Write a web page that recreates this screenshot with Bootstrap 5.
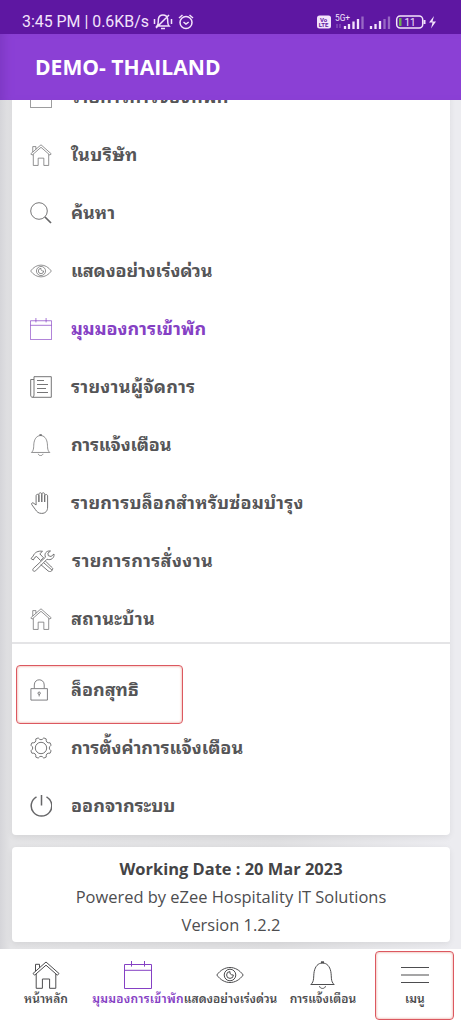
<!DOCTYPE html>
<html lang="th">
<head>
<meta charset="utf-8">
<meta name="viewport" content="width=device-width, initial-scale=1">
<title>DEMO- THAILAND</title>
<link href="https://cdn.jsdelivr.net/npm/bootstrap@5.3.0/dist/css/bootstrap.min.css" rel="stylesheet">
<style>
body{font-family:"Open Sans","Noto Sans Thai Looped","Noto Looped Thai","Loma","Waree","Garuda","Noto Sans Thai","Noto Sans",sans-serif;background:#e3e3e5;color:#4d4d4f;height:1024px;overflow:hidden}
svg{fill:none;stroke:currentColor;display:block;flex:none;overflow:visible}
.statusbar{height:34px;background:#5e17a2;color:#f3e3fb;font:400 15.9px/20px Roboto,sans-serif;padding:12px 24px 0 22px}
.statusbar svg{margin-top:-2px}
.statusbar .bells{margin-top:0}
.statusbar .signals{stroke:none}
.titlebar{height:66px;background:#8b40d5;color:#fff;font-size:21.1px;font-weight:700;padding-left:35px;box-shadow:inset 10px 0 10px -6px #7d38c3}
.content{height:849px;padding:0 11px 0 12px;background:linear-gradient(90deg,#d5d5d9 0,#dcdcdf 5px,#e4e4e6 11px,#e0e0e2 60%,#ececf0 98%)}
.panel{border:0;border-radius:4px;background:#fff;box-shadow:0 2px 6px #00000012}
.menu{margin-top:-32px;height:767px}
.entry{height:58px;padding-left:18px;font-size:18px;font-weight:700;line-height:28px;color:#555557}
.entry svg{width:22px;height:22px;margin-right:19px;stroke-width:.9;color:#666668}
.entry span,.tab span{white-space:nowrap}
.entry span{margin-top:-2px}
.ls-tight{letter-spacing:-.15px}
.ls-a{letter-spacing:.25px}
.ls-b{letter-spacing:.38px}
.entry.purple,.purple,.entry.purple svg{color:#8540c4}
.split{height:2px;background:#e4e4e6;margin:-6px 0 17px}
.info{margin-top:12px;height:95px;padding-top:8px;font-size:16.45px;line-height:28px}
.info b{color:#444446}
.tabs{height:75px;background:#fff}
.tab{width:92.8px;padding-top:12px;font-size:12px;font-weight:600;line-height:18px}
.tab svg{width:28px;height:28px;stroke-width:1;margin-bottom:1px}
.marked{outline:1.5px solid #dc5860;border-radius:3px;box-shadow:inset 0 0 2px 1px #f4cfc8}
.hl{left:17px;top:666px;width:165px;height:57px}
.hl2{left:376px;top:952px;width:77px;height:67px}
</style>
</head>
<body>
<svg width="0" height="0" class="position-absolute">
<defs>
<symbol id="home" viewBox="0 0 28 28"><path d="M1 12.5 14 1l13 11.5-1.6 1.7L14 4.2 2.6 14.2zM3.5 10.2V3.3h4v3.4M4.2 13v14.3h6.2V18h7.2v9.3h6.2V13"/></symbol>
<symbol id="cal" viewBox="0 0 28 28"><path d="M.5 3.5h27v24H.5zM.5 9.3h27M7.5 0v5.6M20.5 0v5.6"/></symbol>
<symbol id="eye" viewBox="0 0 28 28"><path d="M.8 14C8 4 20 4 27.2 14 20 24 8 24 .8 14z"/><circle cx="14" cy="14" r="5.800"/><path d="M14 10.600a3.400 3.400 0 1 0 3.400 3.400M14 10.600c-.5 2 .7 3.600 3.400 3.400"/></symbol>
<symbol id="bell" viewBox="0 0 28 28"><path d="M1.800 23.500c3.800-3 2.400-8 3.400-13C6.200 5.500 9 2 13.500 2s7.300 3.500 8.300 8.500c1 5-.4 10 3.400 13zM10.500 25.200c.5 3 5.500 3 6 0"/><path d="M12 1.300h3" stroke-width="2"/></symbol>
<symbol id="search" viewBox="0 0 22 22"><circle cx="9" cy="9" r="8.300"/><path d="m15 15 6 6" stroke-width="1.700"/></symbol>
<symbol id="paper" viewBox="0 0 22 22"><path d="M4 .7h17.300v20.600H2.600C1.200 21.300.7 20.500.7 19V3.500H4M4 .7V19q0 2-1.500 2.200M7 4.500h7M7 8.500h11M7 12.500h9M7 16.500h11"/></symbol>
<symbol id="hand" viewBox="0 0 22 22"><path d="M5.300 13V3.800c0-2 2.800-2 2.800 0V10 2.300c0-2 2.900-2 2.900 0V10 2.300c0-2 2.900-2 2.900 0V10 4c0-2 2.900-2 2.900 0v11c0 4-2 6.400-6 6.400-3 0-4.700-1.400-6.300-4L1 12.700c-.8-2 1-2.500 2.200-1.200z" transform="translate(.8 0)"/></symbol>
<symbol id="tools" viewBox="0 0 25 22"><path d="M1 8.500 3.200 6C4.500 2.500 8 .5 12.500 1.300L9.800 3.800l3.700 4-3 2.700-3.800-4-1.700.7L3.300 10zM13.800 12.800l8.300 7.400c1.100-1.600.7-2-.7-3.200l-5.800-5.800M20.500 1c-4.200-.6-6.600 2.800-5 6.200L3.300 18.500c-1.500 1.800.6 3.800 2.300 2.300L17 9.200c4 1.500 7.500-1.200 7-5.200l-3 2.500-2.700-.8-.4-2.500zM10.700 14.500l7.500 6.500c1.800 1.200 3.300.6 3.900-.8"/></symbol>
<symbol id="lock" viewBox="0 0 22 24"><path d="M0 10.500h18v12.500H0zM3.700 10V6.500c0-7.500 10.800-7.500 10.800 0V10M9 16.500v2.500"/><circle cx="9" cy="15.500" r="1.300"/></symbol>
<symbol id="gear" viewBox="0 0 22 22"><circle cx="11" cy="11" r="5.700"/><path d="M8.200.9Q11 4.600 13.800.9L16.200 1.900Q15.600 6.400 20.100 5.800L21.100 8.200Q17.400 11 21.100 13.800L20.100 16.200Q15.600 15.600 16.200 20.100L13.800 21.100Q11 17.400 8.200 21.100L5.800 20.100Q6.400 15.600 1.900 16.200L.9 13.800Q4.600 11 .9 8.200L1.900 5.800Q6.400 6.400 5.800 1.900z" stroke-linejoin="round"/></symbol>
<symbol id="power" viewBox="0 0 22 22"><path d="M6.500 1.800a10.300 10.300 0 1 0 10 0M11.500-.5v11" stroke-width="1.500"/></symbol>
</defs>
</svg>
<header>
<div class="statusbar d-flex">
<span id="clock">3:45 PM | 0.6KB/s</span>
<svg class="bells" width="39" height="20" viewBox="0 0 39 20" style="margin-left:4px" stroke-width="1.500"><path d="M4 14h12c-2-2-1-5-1.500-7.500C14 4 12 3 10 3S6 4 5.500 6.500C5 9 6 12 4 14zM8 16.500h4M3 16 16 3M1.500 7v5M18.500 7v5"/><circle cx="33" cy="10.500" r="6"/><path d="m30.500 10 2.500 2 2.700-2M26 6l3.500-3M40 6l-3.500-3"/></svg>
<svg class="signals ms-auto" width="121" height="20" viewBox="0 0 121 20"><rect x="1" y="5.500" width="14" height="13" rx="2.500" fill="#f3e3fb"/><g font-family="Roboto" font-weight="700"><text x="4" y="11.500" font-size="6" fill="#5e17a2">Vo</text><text x="2.700" y="17.300" font-size="6" fill="#5e17a2">LTE</text><text x="19" y="11" font-size="8.300" font-weight="400" fill="#f3e3fb">5G+</text></g>
<g stroke-width="2.300" stroke="#f3e3fb"><path d="M29 19v-3M33 19v-5M37.500 19v-7.500M42 19V9M55 19v-3M59.500 19v-5M64 19v-8"/><path d="M46.500 19V6.500M68.500 19V9M73 19V6.500" opacity=".4"/></g><path d="M21 18v-4M24 14v4" stroke="#f3e3fb" opacity=".4"/>
<rect x="80.700" y="6" width="26" height="12" rx="3.500" stroke="#f3e3fb" stroke-width="1.500"/><path d="M83 8h2.500v8H83z" fill="#6eaa50"/><path d="M108.500 10v4" stroke="#f3e3fb" stroke-width="2"/><text x="88.500" y="15.700" font-family="Roboto" font-size="10" fill="#f3e3fb">11</text><path d="m118 6-5 6.500h3.500l-1.500 6 5-7h-3.500z" fill="#f3e3fb"/></svg>
</div>
<div class="titlebar d-flex align-items-center position-relative z-2"><span id="title">DEMO- THAILAND</span></div>
</header>
<main class="content overflow-hidden">
<section class="panel menu">
<div class="entry d-flex align-items-center"><svg><use href="#cal"/></svg><span class="ls-a">รายการการจองที่พัก</span></div>
<div class="entry d-flex align-items-center"><svg><use href="#home"/></svg><span class="ls-b">ในบริษัท</span></div>
<div class="entry d-flex align-items-center"><svg><use href="#search"/></svg><span>ค้นหา</span></div>
<div class="entry d-flex align-items-center"><svg><use href="#eye"/></svg><span class="ls-tight">แสดงอย่างเร่งด่วน</span></div>
<div class="entry purple d-flex align-items-center"><svg><use href="#cal"/></svg><span>มุมมองการเข้าพัก</span></div>
<div class="entry d-flex align-items-center"><svg><use href="#paper"/></svg><span class="ls-a">รายงานผู้จัดการ</span></div>
<div class="entry d-flex align-items-center"><svg><use href="#bell"/></svg><span class="ls-tight">การแจ้งเตือน</span></div>
<div class="entry d-flex align-items-center"><svg><use href="#hand"/></svg><span class="ls-a">รายการบล็อกสำหรับซ่อมบำรุง</span></div>
<div class="entry d-flex align-items-center"><svg style="width:25px;margin-right:17px"><use href="#tools"/></svg><span class="ls-b">รายการการสั่งงาน</span></div>
<div class="entry d-flex align-items-center"><svg><use href="#home"/></svg><span class="ls-b">สถานะบ้าน</span></div>
<div class="split"></div>
<div class="entry d-flex align-items-center"><svg><use href="#lock"/></svg><span>ล็อกสุทธิ</span></div>
<div class="entry d-flex align-items-center"><svg><use href="#gear"/></svg><span>การตั้งค่าการแจ้งเตือน</span></div>
<div class="entry d-flex align-items-center"><svg><use href="#power"/></svg><span>ออกจากระบบ</span></div>
</section>
<section class="panel info text-center"><b>Working Date : 20 Mar 2023</b><div>Powered by eZee Hospitality IT Solutions</div><div>Version 1.2.2</div></section>
</main>
<nav class="tabs d-flex">
<div class="tab d-flex flex-column align-items-center"><svg><use href="#home"/></svg><span>หน้าหลัก</span></div>
<div class="tab purple d-flex flex-column align-items-center"><svg><use href="#cal"/></svg><span class="ls-a">มุมมองการเข้าพัก</span></div>
<div class="tab d-flex flex-column align-items-center"><svg><use href="#eye"/></svg><span>แสดงอย่างเร่งด่วน</span></div>
<div class="tab d-flex flex-column align-items-center"><svg><use href="#bell"/></svg><span>การแจ้งเตือน</span></div>
<div class="tab d-flex flex-column align-items-center"><svg viewBox="0 0 28 28"><path d="M0 6.500h28M0 14h28M0 21.500h28" stroke-width="1.200"/></svg><span>เมนู</span></div>
</nav>
<div class="marked hl position-absolute"></div>
<div class="marked hl2 position-absolute"></div>
<script src="https://cdn.jsdelivr.net/npm/bootstrap@5.3.0/dist/js/bootstrap.bundle.min.js"></script>
</body>
</html>
